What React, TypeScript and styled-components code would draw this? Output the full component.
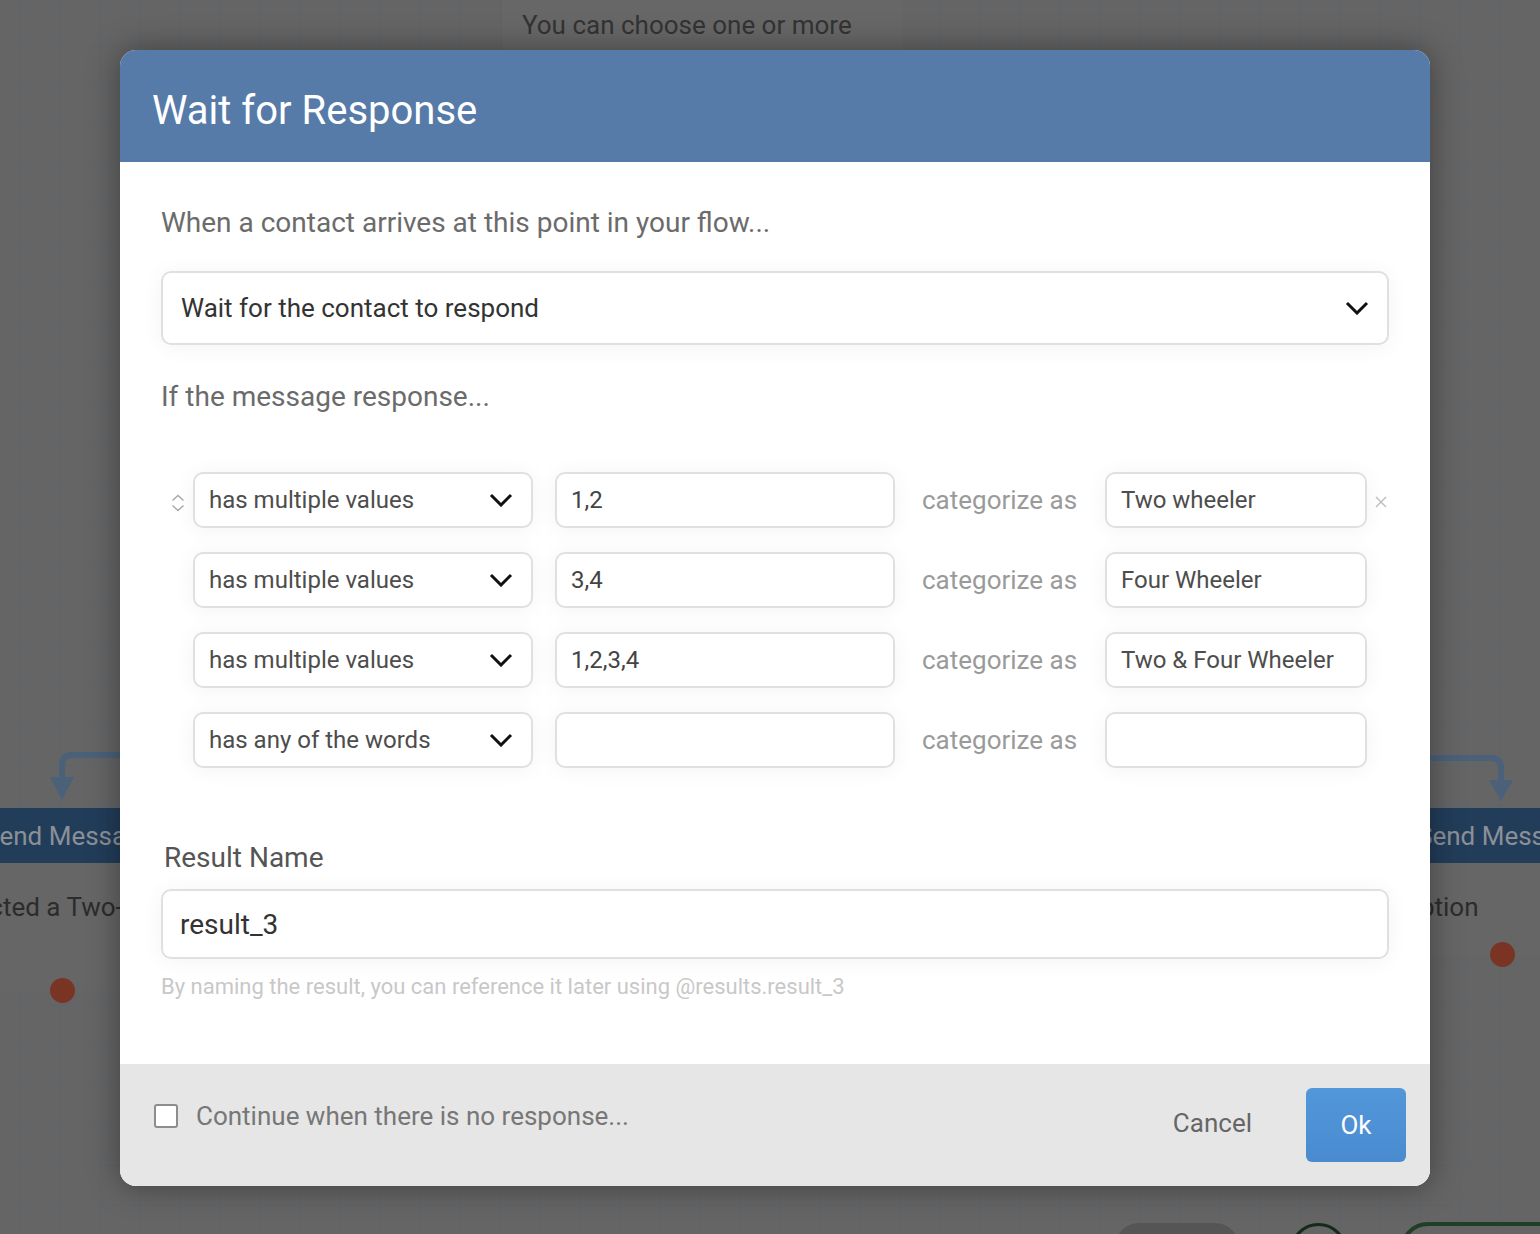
import React from 'react';
import styled, { createGlobalStyle } from 'styled-components';

const GlobalStyle = createGlobalStyle`
  html, body { margin: 0; padding: 0; }
  body {
    font-family: Roboto, "Liberation Sans", Arial, sans-serif;
    width: 1540px;
    height: 1234px;
    overflow: hidden;
  }
  * { box-sizing: border-box; }
`;

const Canvas = styled.div`
  position: relative;
  width: 1540px;
  height: 1234px;
  overflow: hidden;
  background-color: #656565;
  background-image:
    linear-gradient(to right, #5d646c 1px, transparent 1px),
    linear-gradient(to bottom, #5d646c 1px, transparent 1px);
  background-size: 40px 40px;
  background-position: 20px 5px;
`;

const TopNode = styled.div`
  position: absolute;
  left: 502px;
  top: 0;
  width: 400px;
  height: 50px;
  background: #676767;
  display: flex;
  align-items: center;
  padding-left: 20px;
  font-size: 26px;
  color: #333;
  white-space: nowrap;
`;

const FlowNode = styled.div<{ $left: number; $top: number; $width: number }>`
  position: absolute;
  left: ${(p) => p.$left}px;
  top: ${(p) => p.$top}px;
  width: ${(p) => p.$width}px;
  background: #666;
`;

const NodeHeader = styled.div<{ $indent: number }>`
  height: 55px;
  background: #223d5a;
  color: #8b9097;
  font-size: 26px;
  display: flex;
  align-items: center;
  padding-left: ${(p) => p.$indent}px;
  white-space: nowrap;
  overflow: hidden;
`;

const NodeBody = styled.div<{ $indent: number; $height: number }>`
  position: relative;
  height: ${(p) => p.$height}px;
  padding: 28px 0 0 ${(p) => p.$indent}px;
  font-size: 26px;
  line-height: 32px;
  color: #2c2c2c;
  white-space: nowrap;
`;

const ExitDot = styled.div<{ $center: number }>`
  position: absolute;
  left: ${(p) => p.$center - 12}px;
  bottom: -12px;
  width: 25px;
  height: 25px;
  border-radius: 50%;
  background: #7a3424;
`;

const Connector = styled.svg<{ $left: number; $top: number }>`
  position: absolute;
  left: ${(p) => p.$left}px;
  top: ${(p) => p.$top}px;
`;

const DarkPill = styled.div`
  position: absolute;
  left: 1115px;
  top: 1223px;
  width: 124px;
  height: 60px;
  border-radius: 24px;
  background: #555;
`;

const RingNode = styled.div`
  position: absolute;
  left: 1290px;
  top: 1223px;
  width: 57px;
  height: 57px;
  border-radius: 50%;
  border: 3px solid #142b1b;
`;

const GreenNode = styled.div`
  position: absolute;
  left: 1400px;
  top: 1222px;
  width: 220px;
  height: 80px;
  border-radius: 28px;
  border: 4px solid #1f3f27;
`;

const Overlay = styled.div`
  position: absolute;
  inset: 0;
  padding: 50px 0 0 120px;
`;

const Modal = styled.div`
  width: 1310px;
  height: 1136px;
  border-radius: 16px;
  overflow: hidden;
  background: #fff;
  box-shadow: 0 0 32px rgba(0, 0, 0, 0.38);
  display: flex;
  flex-direction: column;
`;

const Header = styled.div`
  height: 112px;
  flex: none;
  background: #577ba8;
  display: flex;
  align-items: center;
  padding: 8px 0 0 32px;
`;

const Title = styled.h1`
  margin: 0;
  font-size: 40px;
  font-weight: 400;
  color: #fff;
`;

const Body = styled.div`
  flex: 1;
  padding: 46px 41px 0 41px;
  display: flex;
  flex-direction: column;
`;

const Prompt = styled.div<{ $gap: number }>`
  margin-top: ${(p) => p.$gap}px;
  font-size: 28px;
  line-height: 30px;
  color: #6b6b6b;
`;

const MainSelect = styled.div`
  margin-top: 33px;
  height: 74px;
  border: 2px solid #e0e0e0;
  border-radius: 10px;
  box-shadow: 0 2px 22px rgba(0, 0, 0, 0.05);
  display: flex;
  align-items: center;
  justify-content: space-between;
  padding: 0 17px 0 18px;
  font-size: 26px;
  color: #333;
`;

const Rules = styled.div`
  margin-top: 60px;
  display: flex;
  flex-direction: column;
  gap: 24px;
`;

const Rule = styled.div`
  display: flex;
  align-items: center;
  height: 56px;
`;

const SortHandle = styled.div`
  width: 32px;
  flex: none;
  padding-left: 10px;
  display: flex;
  align-items: center;
  padding-top: 6px;
`;

const Field = styled.div<{ $width: number; $gap?: number; $color?: string }>`
  width: ${(p) => p.$width}px;
  margin-left: ${(p) => p.$gap ?? 0}px;
  flex: none;
  height: 56px;
  border: 2px solid #e0e0e0;
  border-radius: 10px;
  background: #fff;
  box-shadow: 0 2px 22px rgba(0, 0, 0, 0.05);
  display: flex;
  align-items: center;
  justify-content: space-between;
  padding: 0 18px 0 14px;
  font-size: 24px;
  color: ${(p) => p.$color ?? '#555'};
  white-space: nowrap;
`;

const CategorizeLabel = styled.div`
  width: 210px;
  flex: none;
  padding-left: 27px;
  font-size: 26px;
  color: #9a9a9a;
  white-space: nowrap;
`;

const RemoveButton = styled.div`
  width: 22px;
  flex: none;
  padding-left: 8px;
  display: flex;
  align-items: center;
  padding-top: 4px;
`;

const ResultLabel = styled.div`
  margin-top: 75px;
  padding-left: 3px;
  font-size: 28px;
  line-height: 30px;
  color: #555;
`;

const ResultInput = styled.div`
  margin-top: 16px;
  height: 70px;
  border: 2px solid #e0e0e0;
  border-radius: 10px;
  box-shadow: 0 2px 22px rgba(0, 0, 0, 0.05);
  display: flex;
  align-items: center;
  padding-left: 17px;
  font-size: 28px;
  color: #333;
`;

const HelpText = styled.div`
  margin-top: 15px;
  font-size: 22px;
  line-height: 26px;
  color: #c8c8c8;
`;

const Footer = styled.div`
  height: 122px;
  flex: none;
  background: #e6e6e6;
  display: flex;
  align-items: center;
  padding: 0 24px 0 34px;
`;

const CheckRow = styled.label`
  display: flex;
  align-items: center;
  margin-bottom: 18px;
  flex: 1;
`;

const CheckBox = styled.span`
  width: 24px;
  height: 24px;
  border: 2px solid #8d8d8d;
  border-radius: 3px;
  background: #fff;
  flex: none;
`;

const CheckText = styled.span`
  margin-left: 18px;
  font-size: 26px;
  color: #777;
`;

const CancelButton = styled.div`
  font-size: 26px;
  color: #666;
  margin-bottom: 4px;
`;

const OkButton = styled.div`
  margin-left: 54px;
  width: 100px;
  height: 74px;
  border-radius: 6px;
  background: linear-gradient(#5297da, #4a8bd0);
  color: #fff;
  font-size: 26px;
  display: flex;
  align-items: center;
  justify-content: center;
`;

const Chevron = ({ w = 24 }: { w?: number }) => (
  <svg width={w} height={14} viewBox="0 0 24 14" fill="none">
    <polyline points="2,2 12,12 22,2" stroke="#111" strokeWidth={3} strokeLinejoin="miter" />
  </svg>
);

const SortIcon = () => (
  <svg width="14" height="18" viewBox="0 0 14 18" fill="none">
    <polyline points="1.5,6.5 7,1.5 12.5,6.5" stroke="#a8a8a8" strokeWidth="1.4" />
    <polyline points="1.5,11.5 7,16.5 12.5,11.5" stroke="#a8a8a8" strokeWidth="1.4" />
  </svg>
);

const CloseIcon = () => (
  <svg width="12" height="12" viewBox="0 0 12 12" fill="none">
    <line x1="1" y1="1" x2="11" y2="11" stroke="#bdbdbd" strokeWidth="1.4" />
    <line x1="11" y1="1" x2="1" y2="11" stroke="#bdbdbd" strokeWidth="1.4" />
  </svg>
);

const rules = [
  { op: 'has multiple values', arg: '1,2', cat: 'Two wheeler' },
  { op: 'has multiple values', arg: '3,4', cat: 'Four Wheeler' },
  { op: 'has multiple values', arg: '1,2,3,4', cat: 'Two & Four Wheeler' },
  { op: 'has any of the words', arg: '', cat: '' },
];

export default function App() {
  return (
    <>
      <GlobalStyle />
      <Canvas>
        <TopNode>You can choose one or more</TopNode>

        <Connector $left={40} $top={750} width={90} height={52} viewBox="0 0 90 52">
          <path d="M90 5 H32 Q22 5 22 15 V30" stroke="#4b6179" strokeWidth="6" fill="none" />
          <polygon points="10,27 34,27 22,50" fill="#4b6179" />
        </Connector>
        <FlowNode $left={-100} $top={808} $width={220}>
          <NodeHeader $indent={84}>Send Message</NodeHeader>
          <NodeBody $indent={40} $height={128}>
            Selected a Two-w
            <ExitDot $center={162} />
          </NodeBody>
        </FlowNode>

        <Connector $left={1420} $top={753} width={100} height={49} viewBox="0 0 100 49">
          <path d="M0 5 H71 Q81 5 81 15 V30" stroke="#4b6179" strokeWidth="6" fill="none" />
          <polygon points="69,27 93,27 81,48" fill="#4b6179" />
        </Connector>
        <FlowNode $left={1400} $top={808} $width={204}>
          <NodeHeader $indent={17}>Send Message</NodeHeader>
          <NodeBody $indent={2} $height={92}>
            Option
            <ExitDot $center={102} />
          </NodeBody>
        </FlowNode>

        <DarkPill />
        <RingNode />
        <GreenNode />

        <Overlay>
          <Modal>
            <Header>
              <Title>Wait for Response</Title>
            </Header>
            <Body>
              <Prompt $gap={0}>When a contact arrives at this point in your flow...</Prompt>
              <MainSelect>
                <span>Wait for the contact to respond</span>
                <Chevron w={26} />
              </MainSelect>
              <Prompt $gap={37}>If the message response...</Prompt>
              <Rules>
                {rules.map((r, i) => (
                  <Rule key={i}>
                    <SortHandle>{i === 0 ? <SortIcon /> : null}</SortHandle>
                    <Field $width={340} $color="#4d4d4d">
                      <span>{r.op}</span>
                      <Chevron />
                    </Field>
                    <Field $width={340} $gap={22} $color="#444">
                      <span>{r.arg}</span>
                    </Field>
                    <CategorizeLabel>categorize as</CategorizeLabel>
                    <Field $width={262} $color="#4d4d4d">
                      <span>{r.cat}</span>
                    </Field>
                    <RemoveButton>{i === 0 ? <CloseIcon /> : null}</RemoveButton>
                  </Rule>
                ))}
              </Rules>
              <ResultLabel>Result Name</ResultLabel>
              <ResultInput>result_3</ResultInput>
              <HelpText>By naming the result, you can reference it later using @results.result_3</HelpText>
            </Body>
            <Footer>
              <CheckRow>
                <CheckBox />
                <CheckText>Continue when there is no response...</CheckText>
              </CheckRow>
              <CancelButton>Cancel</CancelButton>
              <OkButton>Ok</OkButton>
            </Footer>
          </Modal>
        </Overlay>
      </Canvas>
    </>
  );
}
